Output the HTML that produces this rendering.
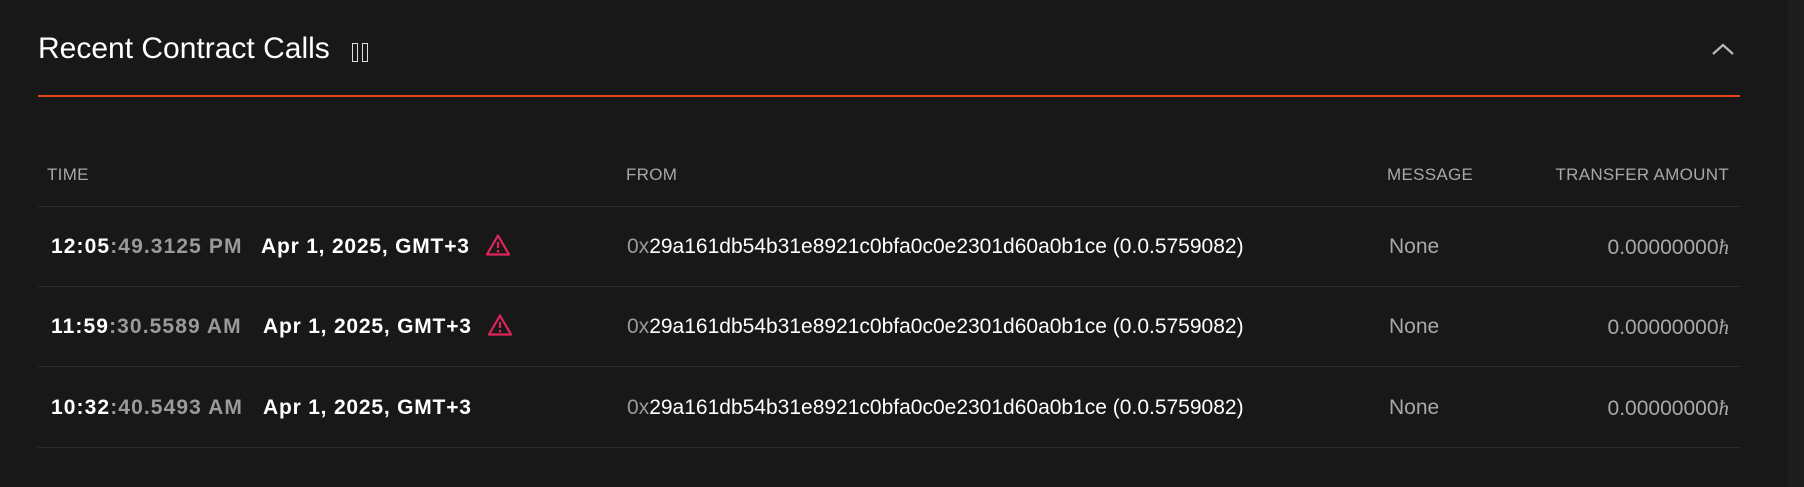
<!DOCTYPE html>
<html><head><meta charset="utf-8"><style>
body{margin:0;width:1804px;height:487px;background:#181818;position:relative;overflow:hidden;font-family:"Liberation Sans",Arial,sans-serif;}
.a{position:absolute;white-space:nowrap;}
.title{left:38px;top:32px;font-size:30px;color:#fff;}
.hr{position:absolute;left:38px;width:1702px;height:1px;background:#2c2c2c;}
.h{top:165px;font-size:17px;color:#a8a8a8;letter-spacing:0.3px;}
.t{font-size:21px;color:#fff;line-height:24px;}
.b{font-weight:bold;}
.tm{letter-spacing:1.1px;font-weight:bold;}
.d{letter-spacing:0.8px;}
.g{color:#9a9a9a;}
.gv{color:#a8a8a8;}
</style></head><body>
<div class="a title">Recent Contract Calls</div>
<div class="a" style="left:352px;top:43px;width:4px;height:17px;border:1px solid #ddd;"></div>
<div class="a" style="left:362px;top:43px;width:4px;height:17px;border:1px solid #ddd;"></div>
<svg class="a" style="left:1710px;top:40px" width="26" height="18" viewBox="0 0 26 18"><path d="M3 14 L13 5 L23 14" stroke="#bbb" stroke-width="2.2" fill="none"/></svg>
<div class="a" style="left:38px;top:95px;width:1702px;height:2px;background:#e8441a;"></div>
<div class="a" style="left:1788px;top:0;width:16px;height:487px;background:#1d1d1d;"></div>

<div class="a h" style="left:47px">TIME</div>
<div class="a h" style="left:626px">FROM</div>
<div class="a h" style="left:1387px">MESSAGE</div>
<div class="a h" style="right:75px">TRANSFER AMOUNT</div>
<div class="hr" style="top:206px"></div>
<div class="hr" style="top:286px"></div>
<div class="hr" style="top:366px"></div>
<div class="hr" style="top:447px"></div>

<div class="a t tm" style="left:51px;top:235px"><span>12:05</span><span class="g">:49.3125 PM</span></div>
<div class="a t b d" style="left:261px;top:235px">Apr 1, 2025, GMT+3</div>
<svg class="a" style="left:485px;top:233px" width="26" height="24" viewBox="0 0 26 24"><path d="M13 2.5 L24 21.5 L2 21.5 Z" stroke="#e0245a" stroke-width="2.2" fill="none" stroke-linejoin="round"/><path d="M13 9 V15" stroke="#e0245a" stroke-width="2.2"/><circle cx="13" cy="18.2" r="1.3" fill="#e0245a"/></svg>
<div class="a t" style="left:627px;top:235px"><span class="g">0x</span>29a161db54b31e8921c0bfa0c0e2301d60a0b1ce (0.0.5759082)</div>
<div class="a t gv" style="left:1389px;top:235px">None</div>
<div class="a t gv" style="right:75px;top:235px">0.00000000<i style="font-family:'Liberation Serif',serif">ħ</i></div>

<div class="a t tm" style="left:51px;top:315px"><span>11:59</span><span class="g">:30.5589 AM</span></div>
<div class="a t b d" style="left:263px;top:315px">Apr 1, 2025, GMT+3</div>
<svg class="a" style="left:487px;top:313px" width="26" height="24" viewBox="0 0 26 24"><path d="M13 2.5 L24 21.5 L2 21.5 Z" stroke="#e0245a" stroke-width="2.2" fill="none" stroke-linejoin="round"/><path d="M13 9 V15" stroke="#e0245a" stroke-width="2.2"/><circle cx="13" cy="18.2" r="1.3" fill="#e0245a"/></svg>
<div class="a t" style="left:627px;top:315px"><span class="g">0x</span>29a161db54b31e8921c0bfa0c0e2301d60a0b1ce (0.0.5759082)</div>
<div class="a t gv" style="left:1389px;top:315px">None</div>
<div class="a t gv" style="right:75px;top:315px">0.00000000<i style="font-family:'Liberation Serif',serif">ħ</i></div>

<div class="a t tm" style="left:51px;top:396px"><span>10:32</span><span class="g">:40.5493 AM</span></div>
<div class="a t b d" style="left:263px;top:396px">Apr 1, 2025, GMT+3</div>
<div class="a t" style="left:627px;top:396px"><span class="g">0x</span>29a161db54b31e8921c0bfa0c0e2301d60a0b1ce (0.0.5759082)</div>
<div class="a t gv" style="left:1389px;top:396px">None</div>
<div class="a t gv" style="right:75px;top:396px">0.00000000<i style="font-family:'Liberation Serif',serif">ħ</i></div>
</body></html>
